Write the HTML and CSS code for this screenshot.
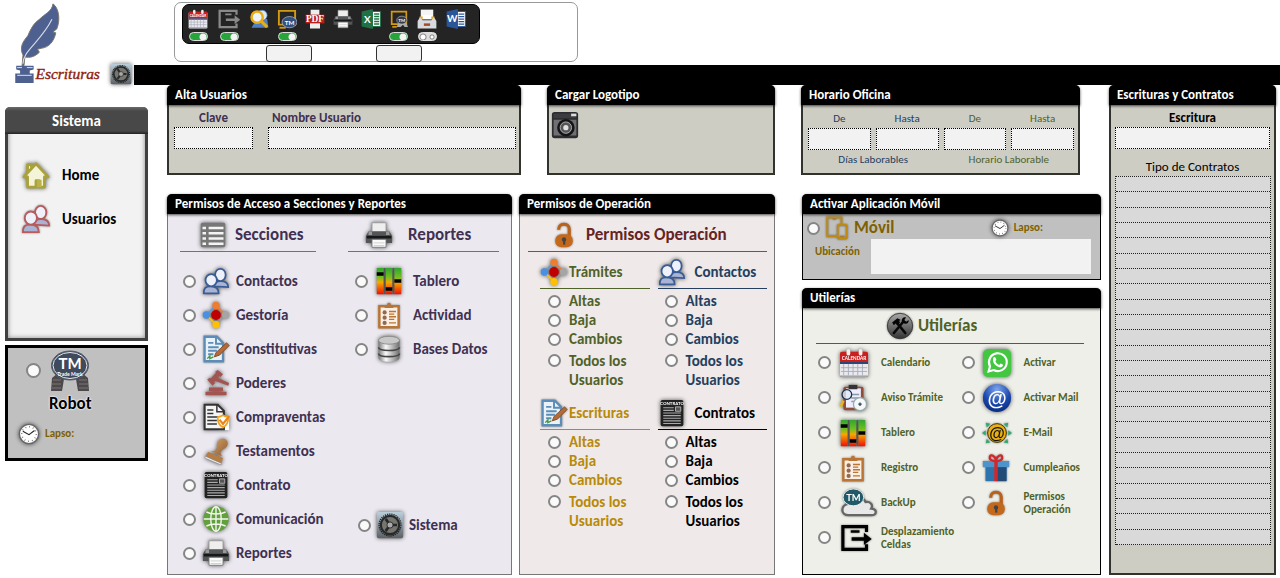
FILE: index.html
```html
<!DOCTYPE html>
<html lang="es">
<head>
<meta charset="utf-8">
<title>Escrituras</title>
<link rel="stylesheet" href="styles.css">
</head>
<body>
<svg class="defs" aria-hidden="true">
  <defs>
    <linearGradient id="heat" x1="0" y1="0" x2="0" y2="1"><stop offset="0" stop-color="#2fa52f"/><stop offset=".35" stop-color="#6fc01f"/><stop offset=".55" stop-color="#f5a800"/><stop offset="1" stop-color="#f01005"/></linearGradient>
    <linearGradient id="steel" x1="0" y1="0" x2="1" y2="0"><stop offset="0" stop-color="#777"/><stop offset=".35" stop-color="#fafafa"/><stop offset="1" stop-color="#6d6d6d"/></linearGradient>
    <linearGradient id="box" x1="0" y1="0" x2="0" y2="1"><stop offset="0" stop-color="#bcd0dc"/><stop offset="1" stop-color="#5b6065"/></linearGradient>
    <linearGradient id="ink" x1="0" y1="0" x2="0" y2="1"><stop offset="0" stop-color="#aaa"/><stop offset="1" stop-color="#333"/></linearGradient>
    <radialGradient id="mail" cx=".5" cy=".2" r=".8"><stop offset="0" stop-color="#7fa5ea"/><stop offset=".6" stop-color="#1b49b0"/><stop offset="1" stop-color="#0b2c80"/></radialGradient>
    <linearGradient id="wood" x1="0" y1="0" x2="1" y2="1"><stop offset="0" stop-color="#d9a268"/><stop offset="1" stop-color="#8c5a2c"/></linearGradient>
  </defs>
</svg>
<svg class="symbols" aria-hidden="true">
  <symbol id="people" viewBox="0 0 32 32"><g stroke-width="2" stroke="currentColor" fill="#eef1fa"><path d="M14 22c0-4 3-6 7-6s9 1 9 7z" fill="#a9b4d4" class="shirt"/><ellipse cx="21" cy="9" rx="6" ry="7"/><path d="M2 30c0-6 2-8 8-8s9 2 9 8z" fill="#a9b4d4" class="shirt"/><ellipse cx="10.500" cy="15" rx="6.500" ry="7"/></g></symbol>
  <symbol id="house" viewBox="0 0 32 32"><path d="M3 18 16 4l13 14h-4v11h-6v-7h-3v7H7V18zM7 12V5h4v3" fill="#f4f4d8" stroke="#a9a23a" stroke-width="3" stroke-linejoin="round"/><path d="M17 21h5v8h-5z" fill="#b9b24a"/></symbol>
  <symbol id="gear" viewBox="0 0 32 32"><rect x="1" y="1" width="30" height="30" rx="2" fill="url(#box)"/><circle cx="16" cy="16" r="12.500" fill="none" stroke="#222" stroke-width="1.500" stroke-dasharray="1.500 1"/><circle cx="16" cy="16" r="10.500" fill="#77756f" stroke="#26282a" stroke-width="2.500"/><path d="m16 16 8 0M16 16l-5-7M16 16l-5 7" stroke="#26282a" stroke-width="3"/><circle cx="16" cy="16" r="3.500" fill="#aaa" stroke="#26282a"/></symbol>
  <symbol id="list" viewBox="0 0 32 32"><rect x="2" y="2" width="28" height="28" rx="2" fill="#777"/><path d="M4 8h4M11 8h17M4 14h4M11 14h17M4 20h4M11 20h17M4 26h4M11 26h17" stroke="#f4f4f4" stroke-width="2.600"/></symbol>
  <symbol id="printer" viewBox="0 0 32 32"><path d="M8 2h16v10H8z" fill="#eee" stroke="#999"/><path d="M4 12h24l3 5v8H1v-8z" fill="#535557"/><path d="M2 17h28v3H2z" fill="#171819"/><path d="M4 12h4v4H4zM24 12h4v4h-4z" fill="#999"/><path d="M8 21h16v9H8z" fill="#fafafa" stroke="#777"/><path d="M10 25h12M10 28h12" stroke="#ccc"/></symbol>
  <symbol id="network" viewBox="0 0 32 32"><path d="M16 5 27 16" stroke="#ed7d31" stroke-width="2"/><path d="M27 16 16 27" stroke="#999" stroke-width="2"/><path d="M16 27 5 16" stroke="#ffc000" stroke-width="2"/><path d="M5 16 16 5" stroke="#5b9bd5" stroke-width="2"/><circle cx="16" cy="5" r="4.200" fill="#ed7d31"/><circle cx="27" cy="16" r="4.200" fill="#a5a5a5"/><circle cx="16" cy="27" r="4.200" fill="#ffc000"/><circle cx="5" cy="16" r="4.200" fill="#4a90e2"/><circle cx="16" cy="16" r="5.600" fill="#c00000"/></symbol>
  <symbol id="signdoc" viewBox="0 0 32 32"><path d="M3 2h14l7 7v21H3z" fill="#eaf2f8" stroke="#5b8db8" stroke-width="2.600"/><path d="M16 2v8h8M7 9h6M7 14h12M7 18h10M7 22h6" fill="none" stroke="#5b8db8" stroke-width="2.200"/><path d="m14 25 2-5L28 9l3 3-11 11z" fill="#b56a38" stroke="#7a4a2a"/><path d="m6 27 3-3v3l4-2" fill="none" stroke="#4a9a3a" stroke-width="1.600"/></symbol>
  <symbol id="gavel" viewBox="0 0 32 32"><g fill="#a25450"><path d="m8 13 9-10 4 3-9 11z"/><path d="m6 12 3-2 6 6-3 3zM15 3l3-2 6 5-3 3z"/><path d="m16 9 15 7-1 3-16-6z"/><path d="M8 21h16v4H8zM4 26h24v4H4z"/></g></symbol>
  <symbol id="shielddoc" viewBox="0 0 32 32"><path d="M18 16h13v15H18z" fill="#fff"/><path d="M3 2h15l7 7v21H3z" fill="#f4f4f4" stroke="#333" stroke-width="2.400"/><path d="M17 2v8h8M6 8h7M6 12h7M6 16h13M6 20h11M6 24h11" fill="none" stroke="#333" stroke-width="1.700"/><path d="M18 16c3 0 4-1 6-2 2 1 3 2 6 2 0 6-1 9-6 12-5-3-6-6-6-12z" fill="#fff" stroke="#f5a11a" stroke-width="2"/><path d="m20 19 4 5 7-9" fill="none" stroke="#e9861a" stroke-width="2.500"/></symbol>
  <symbol id="stamp" viewBox="0 0 32 32"><path d="M20 3c5-3 11 1 9 6-1 4-5 4-7 7-2 2 0 4 1 6l-13-6c5 0 7-1 7-5 0-3 0-6 3-8z" fill="url(#wood)"/><path d="m7 17 17 7-2 6L4 22z" fill="#b77c42"/><path d="m4 22 18 8v2L3 24z" fill="#eee" stroke="#777" stroke-width=".600"/></symbol>
  <symbol id="contract" viewBox="0 0 32 32"><rect x="3" y="1" width="26" height="30" rx="2" fill="#222"/><text x="16" y="7" class="t-contract" text-anchor="middle">CONTRATO</text><path d="M6 10h12M6 13h12M6 16h20M6 19h20M6 22h20M6 25h20M6 28h20" stroke="#aaa" stroke-width="1.400"/><path d="M20 9h6v5h-6z" fill="#555" stroke="#bbb"/></symbol>
  <symbol id="globe" viewBox="0 0 32 32"><circle cx="16" cy="16" r="14.500" fill="#62a03c"/><g fill="none" stroke="#f2f6ee" stroke-width="1.600"><ellipse cx="16" cy="16" rx="6" ry="14"/><path d="M16 2v28M2 16h28M5 8c6 3 16 3 22 0M5 24c6-3 16-3 22 0"/></g></symbol>
  <symbol id="bars" viewBox="0 0 32 32"><path d="M2 1h8v30H2zM12 1h8v30h-8zM22 1h8v30h-8z" fill="url(#heat)"/><path d="M2 6h8v4H2zM12 23h8v4h-8zM22 14h8v4h-8z" fill="#000"/><path d="M11 1v30M21 1v30" stroke="#555" stroke-width="2"/></symbol>
  <symbol id="clipboard" viewBox="0 0 32 32"><path d="M5 6h22v24H5z" fill="#fbeee2" stroke="#b97535" stroke-width="2.800"/><path d="M11 8V5h3a2.200 2.200 0 1 1 4 0h3v3z" fill="#b97535"/><g fill="#8e6a55"><circle cx="11" cy="13" r="2.400"/><circle cx="11" cy="19" r="2.400"/><circle cx="11" cy="25" r="2.400"/></g><path d="M16 12h8M16 15h6M16 18h8M16 21h6M16 25h8" stroke="#b97535" stroke-width="1.600"/></symbol>
  <symbol id="database" viewBox="0 0 32 32"><path d="M4 6v20c0 6 24 6 24 0V6z" fill="url(#steel)"/><ellipse cx="16" cy="6" rx="12" ry="4.500" fill="#c8c8c8" stroke="#888"/><path d="M4 14c0 5 24 5 24 0M4 21c0 5 24 5 24 0" fill="none" stroke="#444" stroke-width="1.800"/></symbol>
  <symbol id="lock" viewBox="0 0 32 32"><path d="M10 10V9c0-7 12-7 12 0v8" fill="none" stroke="#b9621b" stroke-width="3.600"/><rect x="6" y="15" width="20" height="15" rx="7" fill="#c4691c"/><circle cx="16" cy="21" r="2.500" fill="#444"/><path d="M15 22h2.500v5H15z" fill="#444"/></symbol>
  <symbol id="devices" viewBox="0 0 32 32"><g fill="none" stroke="#c08a10" stroke-width="2.600"><path d="M17 27H3V2h19v8"/><rect x="17" y="12" width="12" height="18" rx="1"/></g><path d="M10 4h5M20 27h6" stroke="#a87808" stroke-width="1.600"/></symbol>
  <symbol id="clock" viewBox="0 0 32 32"><circle cx="16" cy="16" r="14" fill="#fff" stroke="#666" stroke-width="2"/><circle cx="16" cy="16" r="10.500" fill="none" stroke="#444" stroke-width="2" stroke-dasharray="1 4.500"/><path d="m7 12 9 5 8-6" fill="none" stroke="#222" stroke-width="1.600"/></symbol>
  <symbol id="tools" viewBox="0 0 32 32"><circle cx="16" cy="16" r="14.500" fill="url(#ink)" stroke="#333"/><path d="m9 24 10-12M13 13l9 11" stroke="#080808" stroke-width="3" stroke-linecap="round"/><path d="m7 12 6-5 4 2-2 1 1 2-3 3-2-2-2 2zM18 9c1-3 3-3 5-3l-2 3 2 2 3-2c0 4-3 5-5 4l-3-1z" fill="#050505"/></symbol>
  <symbol id="calendar" viewBox="0 0 32 32"><rect x="1" y="5" width="30" height="26" rx="2" fill="#e9e9ee"/><path d="M1 15V6q0-2 2-2h26q2 0 2 2v9z" fill="#c8201f"/><path d="M1 15h30v2H1z" fill="#1e3b70"/><path d="M5 17v12M10 17v12M15 17v12M20 17v12M25 17v12M2 21h28M2 25h28" stroke="#a9adbc" stroke-width="1"/><path d="M1 30h30" stroke="#777"/><rect x="8" y="1" width="4" height="7" rx="2" fill="#eee"/><rect x="21" y="1" width="4" height="7" rx="2" fill="#eee"/><text x="16" y="13" class="t-cal" text-anchor="middle">CALENDAR</text></symbol>
  <symbol id="notice" viewBox="0 0 32 32"><rect x="5" y="3" width="23" height="27" rx="2" fill="#914d3a"/><path d="M8 5h17v22H8z" fill="#eef"/><path d="M11 1h10v5H11z" fill="#333"/><path d="M14 12h9M14 16h9M14 20h5" stroke="#89a" stroke-width="1.500"/><circle cx="9" cy="12" r="5.500" fill="#dfeaf4" fill-opacity=".8" stroke="#203050" stroke-width="1.500"/><path d="m5 19-3 7" stroke="#e3b71e" stroke-width="3"/><circle cx="24" cy="23" r="7.500" fill="#f4f8f8" stroke="#9aa" stroke-width="1.500"/><path d="M22 23h4M24 21v4" stroke="#345" stroke-width="1.500"/></symbol>
  <symbol id="cloud" viewBox="0 0 40 32"><path d="M9 29c-9 0-9-11 0-12 1-9 15-9 18-2 6-1 8 4 6 7 7 1 6 7 0 7z" fill="#e8e8e8" stroke="#666" stroke-width="2.500"/><ellipse cx="14" cy="10" rx="11" ry="9" fill="#215968" stroke="#e9eef0"/><text x="14" y="13.500" class="t-tm" text-anchor="middle">TM</text></symbol>
  <symbol id="exit" viewBox="0 0 36 32"><path d="M30 9V3H3v26h27v-6" fill="none" stroke="currentColor" stroke-width="3.600"/><path d="M13 15h14v-5l9 7-9 7v-5H13zM12 7h10v3H12z" fill="currentColor"/></symbol>
  <symbol id="phone" viewBox="0 0 32 32"><rect x="1" y="1" width="30" height="30" rx="6" fill="#43c640"/><path d="m7 25 1.500-5.500a9.500 9.500 0 1 1 4 4z" fill="none" stroke="#fff" stroke-width="2.300"/><path d="M12 10.500c1-1.500 2-1 2.500 0l.8 2-1 1.500c1 2 2 3 4 4l1.500-1.500 2.400 1.200c.8 1.400-1 3-2.800 3-4.500-.5-9-5-7.400-10.200z" fill="#fff"/></symbol>
  <symbol id="at" viewBox="0 0 32 32"><circle cx="16" cy="16" r="15" fill="url(#mail)"/><text x="16" y="23" class="t-at" text-anchor="middle">@</text></symbol>
  <symbol id="email" viewBox="0 0 32 32"><path d="m0 16 4-3v6zM32 16l-4-3v6zM4 5l5 1-4 4zM28 5l-5 1 4 4zM4 27l5-1-4-4zM28 27l-5-1 4-4z" fill="#31a872"/><circle cx="16" cy="16" r="10" fill="#eab010" stroke="#3a2c00"/><text x="16" y="22" class="t-email" text-anchor="middle">@</text></symbol>
  <symbol id="gift" viewBox="0 0 32 32"><path d="M4 13h24v18H4z" fill="#2f73ad"/><path d="M16 13h12v18H16z" fill="#234b78"/><path d="M1 8h30v7H1z" fill="#4d94cd"/><path d="M14 8h4v23h-4z" fill="#d2282b"/><path d="M15 8c-4 0-7-2-6-5s6-1 7 4c1-5 6-7 7-4s-2 5-6 5z" fill="none" stroke="#d2282b" stroke-width="2.600"/></symbol>
  <symbol id="camera" viewBox="0 0 32 32"><rect x="1" y="1" width="30" height="30" rx="3" fill="#2d2d2f"/><path d="M3 10h26v18H3z" fill="#707074"/><path d="M3 3h26v5H3z" fill="#3c3c40"/><path d="M23 3h6v3h-6z" fill="#ddd"/><circle cx="17" cy="19" r="10" fill="#141416"/><circle cx="17" cy="19" r="6.500" fill="#555" stroke="#bbb"/><circle cx="17" cy="19" r="3" fill="#e0e0e4"/></symbol>
  <symbol id="search" viewBox="0 0 32 32"><path d="M12 16h17l2 14H4z" fill="#4f80c4"/><circle cx="21" cy="10" r="8" fill="#dbe7f5" stroke="#4f80c4"/><circle cx="13" cy="13" r="9" fill="#eef3fa" stroke="#e8ac14" stroke-width="4"/><path d="m20 20 9 9" stroke="#e8ac14" stroke-width="5"/></symbol>
  <symbol id="monitor" viewBox="0 0 32 32"><path d="M3 3h26v22H3z" fill="#262626" stroke="#d69a12" stroke-width="3"/><path d="M4 30h10" stroke="#d69a12" stroke-width="3"/><ellipse cx="20" cy="21" rx="12" ry="9" fill="#34507c" stroke="#ccd"/><text x="20" y="25" class="t-tm" text-anchor="middle">TM</text></symbol>
  <symbol id="monitor2" viewBox="0 0 32 32"><path d="M3 3h26v22H3z" fill="#262626" stroke="#d69a12" stroke-width="3"/><path d="M4 30h8" stroke="#d69a12" stroke-width="3"/><path d="m12 30 3-9h13l4 9h-6l-3-4-4 4z" fill="#aaa"/><ellipse cx="21" cy="18" rx="9" ry="7" fill="#353c48" stroke="#ccc"/><text x="21" y="21" class="t-tms" text-anchor="middle">TM</text></symbol>
  <symbol id="pdf" viewBox="0 0 32 32"><path d="M9 1h14v9H9zM8 22h16v9H8z" fill="#eee"/><path d="M1 9h30v14H1z" fill="#b9201c"/><text x="16" y="21.500" class="t-pdf" text-anchor="middle">PDF</text></symbol>
  <symbol id="excel" viewBox="0 0 32 32"><path d="M18 4h13v24H18z" fill="#fff" stroke="#207245" stroke-width="1.500"/><path d="M21 8h8M21 12h8M21 16h8M21 20h8M21 24h8" stroke="#207245" stroke-width="2.500"/><path d="m1 4 18-4v32L1 28z" fill="#207245"/><text x="10" y="22" class="t-doc" text-anchor="middle">X</text></symbol>
  <symbol id="word" viewBox="0 0 32 32"><path d="M18 4h13v24H18z" fill="#fff" stroke="#2a5699" stroke-width="1.500"/><path d="M20 8h9M20 12h9M20 16h9M20 20h9M20 24h9" stroke="#2a5699" stroke-width="2"/><path d="m1 4 18-4v32L1 28z" fill="#2a5699"/><text x="10" y="21" class="t-doc" text-anchor="middle">W</text></symbol>
  <symbol id="drawer" viewBox="0 0 32 32"><path d="M6 1h20v14H6z" fill="#f5f5f5"/><path d="M4 12h24v5H4z" fill="#e9a520"/><path d="M9 10h14v6H9z" fill="#fff"/><path d="m1 19 4-6 4 5h14l4-5 4 6v12H1z" fill="#d9dadd"/><path d="M11 23h10v4H11z" fill="#a34b28"/></symbol>
  <symbol id="robot" viewBox="0 0 40 42"><path d="m1 41 1-13 6-5h7l-3 18zM39 41l-1-13-6-5h-7l3 18z" fill="#4d484a"/><path d="M3 30h8M2 34h9M2 38h9M29 30h8M29 34h9M29 38h9" stroke="#777"/><ellipse cx="20" cy="15.500" rx="18.500" ry="14.500" fill="#3f4a5c" stroke="#555e6c"/><ellipse cx="20" cy="15.500" rx="17" ry="13" fill="none" stroke="#e8e8e8"/><text x="20" y="19" class="t-robot" text-anchor="middle">TM</text><text x="20" y="26" class="t-mark" text-anchor="middle">Trade Mark</text></symbol>
</svg>

<header class="top">
  <div class="brand">
    <svg class="logo" viewBox="0 0 102 88" role="img" aria-label="Escrituras"><path d="M53 4c6 4 8 16 4 26l-4 3 3 1c-2 9-7 15-15 16l-4 1 2 3c-5 5-10 6-15 5l-1 9-2 1 1-12c-4-8 0-14 5-20 3-7 6-13 12-17C45 14 52 12 53 4z" fill="#4d6090" stroke="#7b776e"/><path d="M22 66c0-14 18-22 30-46" fill="none" stroke="#d7dbe6" stroke-width="1.200"/><path d="M15 68h18v4l-4 1v3h4v10H14V76h5v-3l-4-1z" fill="#4d6090"/><path d="M16 70h5M26 70h6M16 78h15" stroke="#dfe3ec"/><text x="35" y="82" class="t-logo">Escrituras</text></svg>
    <svg class="i22 glow"><use href="#gear"/></svg>
  </div>
  <div class="strip">
    <div class="toolbox">
      <div class="tools">
        <div class="tool"><svg class="w22"><use href="#calendar"/></svg><input type="checkbox" class="toggle" aria-label="Calendario" checked></div>
        <div class="tool exit"><svg class="w24"><use href="#exit"/></svg><input type="checkbox" class="toggle" aria-label="Desplazamiento" checked></div>
        <div class="tool"><svg class="w20"><use href="#search"/></svg></div>
        <div class="tool"><svg class="w20"><use href="#monitor"/></svg><input type="checkbox" class="toggle" aria-label="Monitor" checked></div>
        <div class="tool"><svg class="w20"><use href="#pdf"/></svg></div>
        <div class="tool"><svg class="w20"><use href="#printer"/></svg></div>
        <div class="tool"><svg class="w20"><use href="#excel"/></svg></div>
        <div class="tool"><svg class="w18"><use href="#monitor2"/></svg><input type="checkbox" class="toggle" aria-label="Robot" checked></div>
        <div class="tool"><svg class="w22"><use href="#drawer"/></svg><input type="checkbox" class="toggle" aria-label="Archivo"></div>
        <div class="tool"><svg class="w20"><use href="#word"/></svg></div>
      </div>
      <div class="slots"><button type="button" aria-label="Monitor"></button><button type="button" aria-label="Robot"></button></div>
    </div>
    <div class="bar"></div>
  </div>
</header>

<main class="page">
  <aside class="side">
    <nav class="menu">
      <h2>Sistema</h2>
      <a href="#home"><svg class="i30 glow"><use href="#house"/></svg>Home</a>
      <a href="#usuarios"><svg class="i30 soft rose"><use href="#people"/></svg><span>Usuarios</span></a>
    </nav>
    <section class="robot">
      <label class="robot-pick"><input type="radio" name="robot"><span><svg class="robot-pic"><use href="#robot"/></svg><b>Robot</b></span></label>
      <p class="lapse"><svg class="i22 glow"><use href="#clock"/></svg>Lapso:</p>
    </section>
  </aside>

  <div class="content">
    <div class="row-top">
      <section class="panel stone">
        <h2>Alta Usuarios</h2>
        <div class="fields">
          <label class="clave">Clave<input type="text"></label>
          <label class="nombre">Nombre Usuario<input type="text"></label>
        </div>
      </section>
      <section class="panel stone">
        <h2>Cargar Logotipo</h2>
        <button type="button" class="upload" aria-label="Cargar Logotipo"><svg class="i28"><use href="#camera"/></svg></button>
      </section>
      <section class="panel stone">
        <h2>Horario Oficina</h2>
        <div class="hours">
          <label class="navy">De<input type="text"></label>
          <label class="navy">Hasta<input type="text"></label>
          <label class="olive">De<input type="text"></label>
          <label class="olive">Hasta<input type="text"></label>
          <p class="navy">Días Laborables</p>
          <p class="olive">Horario Laborable</p>
        </div>
      </section>
    </div>

    <div class="row-main">
      <section class="panel lilac">
        <h2>Permisos de Acceso a Secciones y Reportes</h2>
        <div class="access">
          <div class="col">
            <h3><svg class="i28 glow"><use href="#list"/></svg>Secciones</h3>
            <label><input type="radio" name="s1"><svg class="i28 glow blue"><use href="#people"/></svg>Contactos</label>
            <label><input type="radio" name="s2"><svg class="i28 glow"><use href="#network"/></svg>Gestoría</label>
            <label><input type="radio" name="s3"><svg class="i28 soft"><use href="#signdoc"/></svg>Constitutivas</label>
            <label><input type="radio" name="s4"><svg class="i28 glow"><use href="#gavel"/></svg>Poderes</label>
            <label><input type="radio" name="s5"><svg class="i28 glow"><use href="#shielddoc"/></svg>Compraventas</label>
            <label><input type="radio" name="s6"><svg class="i28 glow"><use href="#stamp"/></svg>Testamentos</label>
            <label><input type="radio" name="s7"><svg class="i28 glow"><use href="#contract"/></svg>Contrato</label>
            <label><input type="radio" name="s8"><svg class="i28 glow"><use href="#globe"/></svg>Comunicación</label>
            <label><input type="radio" name="s9"><svg class="i28 glow"><use href="#printer"/></svg>Reportes</label>
          </div>
          <div class="col reports">
            <h3><svg class="i28 glow"><use href="#printer"/></svg>Reportes</h3>
            <label><input type="radio" name="r1"><svg class="i28 glow"><use href="#bars"/></svg>Tablero</label>
            <label><input type="radio" name="r2"><svg class="i28 soft"><use href="#clipboard"/></svg>Actividad</label>
            <label><input type="radio" name="r3"><svg class="i28 glow"><use href="#database"/></svg>Bases Datos</label>
            <label class="system"><input type="radio" name="r4"><svg class="i28 glow"><use href="#gear"/></svg>Sistema</label>
          </div>
        </div>
      </section>

      <section class="panel blush">
        <h2>Permisos de Operación</h2>
        <h3 class="op-title"><svg class="i28 soft"><use href="#lock"/></svg>Permisos Operación</h3>
        <div class="ops">
          <div class="op olive-d"><h4><svg class="i28 glow"><use href="#network"/></svg>Trámites</h4>
            <label><input type="radio" name="t1">Altas</label><label><input type="radio" name="t2">Baja</label><label><input type="radio" name="t3">Cambios</label><label class="two"><input type="radio" name="t4">Todos los<br>Usuarios</label></div>
          <div class="op navy-d wide"><h4><svg class="i28 glow blue"><use href="#people"/></svg><span>Contactos</span></h4>
            <label><input type="radio" name="c1">Altas</label><label><input type="radio" name="c2">Baja</label><label><input type="radio" name="c3">Cambios</label><label class="two"><input type="radio" name="c4">Todos los<br>Usuarios</label></div>
          <div class="op gold"><h4><svg class="i28 soft"><use href="#signdoc"/></svg><span>Escrituras</span></h4>
            <label><input type="radio" name="e1">Altas</label><label><input type="radio" name="e2">Baja</label><label><input type="radio" name="e3">Cambios</label><label class="two"><input type="radio" name="e4">Todos los<br>Usuarios</label></div>
          <div class="op black wide"><h4><svg class="i28 glow"><use href="#contract"/></svg><span>Contratos</span></h4>
            <label><input type="radio" name="k1">Altas</label><label><input type="radio" name="k2">Baja</label><label><input type="radio" name="k3">Cambios</label><label class="two"><input type="radio" name="k4">Todos los<br>Usuarios</label></div>
        </div>
      </section>

      <div class="stack">
        <section class="panel gray">
          <h2>Activar Aplicación Móvil</h2>
          <div class="mobile">
            <div class="mobile-head">
              <label><input type="radio" name="movil"><svg class="i24 soft"><use href="#devices"/></svg>Móvil</label>
              <p class="lapse"><svg class="i18 glow"><use href="#clock"/></svg>Lapso:</p>
            </div>
            <label class="place">Ubicación<textarea></textarea></label>
          </div>
        </section>
        <section class="panel mint">
          <h2>Utilerías</h2>
          <h3 class="ut-title"><svg class="i28 soft"><use href="#tools"/></svg>Utilerías</h3>
          <div class="utils">
            <label><input type="radio" name="u1"><svg class="i30 glow"><use href="#calendar"/></svg>Calendario</label>
            <label><input type="radio" name="u2"><svg class="i30 glow"><use href="#phone"/></svg>Activar</label>
            <label><input type="radio" name="u3"><svg class="i28 glow"><use href="#notice"/></svg>Aviso Trámite</label>
            <label><input type="radio" name="u4"><svg class="i30 glow"><use href="#at"/></svg>Activar Mail</label>
            <label><input type="radio" name="u5"><svg class="i28 glow"><use href="#bars"/></svg>Tablero</label>
            <label><input type="radio" name="u6"><svg class="i30 soft"><use href="#email"/></svg>E-Mail</label>
            <label><input type="radio" name="u7"><svg class="i28 soft"><use href="#clipboard"/></svg>Registro</label>
            <label><input type="radio" name="u8"><svg class="i28 soft"><use href="#gift"/></svg>Cumpleaños</label>
            <label><input type="radio" name="u9"><svg class="cloud soft"><use href="#cloud"/></svg>BackUp</label>
            <label><input type="radio" name="u10"><svg class="i28 soft"><use href="#lock"/></svg>Permisos<br>Operación</label>
            <label><input type="radio" name="u11"><svg class="exit-pic soft"><use href="#exit"/></svg>Desplazamiento<br>Celdas</label>
          </div>
        </section>
      </div>
    </div>
  </div>

  <section class="panel stone contracts">
    <h2>Escrituras y Contratos</h2>
    <label>Escritura<input type="text"></label>
    <h3>Tipo de Contratos</h3>
    <ul><li></li><li></li><li></li><li></li><li></li><li></li><li></li><li></li><li></li><li></li><li></li><li></li><li></li><li></li><li></li><li></li><li></li><li></li><li></li><li></li><li></li><li></li><li></li><li></li></ul>
  </section>
</main>
</body>
</html>
```
FILE: styles.css
```css
* { box-sizing: border-box; }
body { display: flex; flex-direction: column; min-height: 100vh; margin: 0; background: #fff; color: #000; font: bold 15px/18px Carlito, Lato, sans-serif; }
h2, h3, h4, p, ul { margin: 0; padding: 0; }
svg { display: block; flex: none; overflow: visible; }
.defs { position: absolute; width: 0; height: 0; }
.symbols { display: none; }
button { padding: 0; font: inherit; }
input, textarea { margin: 0; font: inherit; }

.t-cal { font: bold 5px Lato, sans-serif; fill: #fff; }
.t-contract { font: bold 5px Lato, sans-serif; fill: #fff; }
.t-tm { font: bold 10px Lato, sans-serif; fill: #fff; }
.t-tms { font: bold 8px Lato, sans-serif; fill: #fff; }
.t-at { font: bold 21px "Liberation Sans", sans-serif; fill: #fff; }
.t-email { font: bold 17px "Liberation Sans", sans-serif; fill: #111; }
.t-pdf { font: bold 15px "Liberation Serif", serif; fill: #fff; }
.t-doc { font: bold 16px Lato, sans-serif; fill: #fff; }
.t-robot { font: bold 15px Lato, sans-serif; fill: #fff; }
.t-mark { font: bold 5px Lato, sans-serif; fill: #fff; }
.t-logo { font: italic 16px "Liberation Serif", serif; fill: #8f1c10; stroke: #8f1c10; stroke-width: .4px; }

.i18 { width: 18px; height: 18px; }
.i22 { width: 22px; height: 22px; }
.i24 { width: 24px; height: 24px; }
.i28 { width: 28px; height: 28px; }
.i30 { width: 30px; height: 30px; }
.glow { filter: drop-shadow(0 0 2px rgba(0, 0, 0, .65)); }
.soft { filter: drop-shadow(0 0 1px rgba(0, 0, 0, .45)); }
.blue { color: #3a5c95; }
.rose { color: #b95a5c; }

input[type="radio"] { appearance: none; flex: none; width: 13px; height: 13px; border: 2px solid #858585; border-radius: 50%; background: #fafafa; }
input[type="text"] { display: block; width: 100%; height: 22px; padding: 0 4px; border: 1px dotted #000; border-radius: 0; background: #f2f2f2; }

.top { display: flex; }
.brand { display: flex; align-items: flex-end; gap: 8px; width: 134px; height: 85px; }
.logo { width: 102px; height: 85px; }
.strip { flex: 1; padding-top: 2px; }
.toolbox { width: 404px; height: 60px; margin-left: 40px; padding: 1px 7px 0; border: 1px solid #999; border-radius: 7px; }
.tools { display: flex; gap: 8px; width: 298px; height: 40px; padding: 4px 4px 0; border: 1px solid #000; border-radius: 7px; background: #242424; }
.tool { display: flex; flex-direction: column; align-items: center; gap: 3px; }
.tool svg { height: 20px; }
.exit { color: #8a8a8a; }
.w18 { width: 18px; }
.w20 { width: 20px; }
.w22 { width: 22px; }
.w24 { width: 24px; }
.toggle { appearance: none; width: 19px; height: 9px; border: 1px solid #ddd; border-radius: 5px; background: radial-gradient(circle at 4px 4px, #fff 2px, #888 3px, transparent 4px), radial-gradient(circle at 13px 4px, #fff 1px, #888 2px, transparent 3px), #ddd; }
.toggle:checked { background: radial-gradient(circle at 13px 4px, #f4f4f4 3px, transparent 4px), #27a53a; }
.slots { display: flex; gap: 64px; padding: 1px 0 0 84px; }
.slots button { width: 46px; height: 17px; border: 1px solid #333; border-radius: 3px; background: #f2f2f2; }
.bar { height: 20px; margin-top: 3px; background: #000; }

.page { display: flex; flex: 1; align-items: stretch; padding: 0 4px 3px 5px; }
.side { display: flex; flex-direction: column; gap: 4px; width: 143px; padding-top: 22px; }
.menu { height: 234px; border: 3px solid #404040; border-top: 0; border-radius: 5px 5px 0 0; background: #f2f2f2; box-shadow: inset 0 0 5px #888; }
.menu h2 { margin: 0 -3px 26px; padding: 5px 0 4px; border-radius: 5px 5px 0 0; background: linear-gradient(#6a6a6a, #484848 4px, #484848 24px, #222); color: #fff; font-size: 15px; text-align: center; }
.menu a { display: flex; align-items: center; gap: 11px; margin-bottom: 14px; padding-left: 13px; color: #000; text-decoration: none; }
.rose .shirt { fill: #dba9a8; }
.robot { height: 116px; padding: 2px 10px; border: 3px solid #000; background: #c0c0c0; }
.robot-pick { display: flex; align-items: flex-start; gap: 8px; height: 73px; }
.robot-pick input { width: 15px; height: 15px; margin: 13px 0 0 8px; }
.robot-pick span { display: flex; flex-direction: column; align-items: center; gap: 3px; }
.robot-pick b { font-size: 17px; text-shadow: 0 0 2px #fff, 0 0 2px #fff; }
.robot-pic { width: 40px; height: 42px; }
.lapse { display: flex; align-items: center; gap: 5px; color: #7f6000; font-size: 11px; }

.content { flex: 1; display: flex; flex-direction: column; gap: 19px; min-width: 0; padding-left: 19px; }
.panel { min-width: 0; border: 1px solid #777; border-top: 0; border-radius: 5px 5px 0 0; }
.panel > h2 { height: 20px; margin: 0 -1px; padding: 1px 8px; border-radius: 5px 5px 0 0; background: #000; box-shadow: 0 1px 3px rgba(0, 0, 0, .7); color: #fff; font-size: 13px; white-space: nowrap; }
.stone { border: 2px solid #33332e; border-top: 0; background: #cdcdc4; }
.panel.stone > h2 { margin: 0 -2px; }
.lilac { background: #ebe9ef; color: #403152; }
.blush { margin-left: 7px; background: #efe9e9; }
.gray { border-color: #000; background: #c0c0c0; color: #7f6000; }
.mint { flex: 1; border-color: #000; background: #eeefe9; color: #4f6228; }
.navy { color: #243f60; }
.olive { color: #4f6228; }

.row-top { display: grid; grid-template-columns: 354fr 228fr 279fr; gap: 26px; height: 90px; padding-right: 21px; }
.fields { display: flex; gap: 15px; padding: 4px 3px 0 5px; color: #403152; font-size: 13px; }
.clave { width: 79px; text-align: center; }
.nombre { flex: 1; text-indent: 4px; }
.upload { display: block; margin: 6px 2px; border: 0; background: none; }
.hours { display: grid; grid-template-columns: repeat(4, 1fr); gap: 1px 5px; padding: 5px 4px 0 5px; font-size: 11px; font-weight: normal; text-align: center; }
.hours p { grid-column: span 2; line-height: 18px; }

.row-main { display: grid; grid-template-columns: 345fr 263fr 326fr; flex: 1; }
.stack { display: flex; flex-direction: column; gap: 8px; padding-left: 27px; }

h3 { display: flex; align-items: center; font-size: 17px; }
.access { display: flex; justify-content: space-between; padding: 4px 12px 0; }
.col { width: 136px; }
.reports { width: 151px; }
.col h3 { gap: 8px; height: 34px; margin-bottom: 12px; padding-left: 19px; border-bottom: 1px solid #4f8090; }
.reports h3 { gap: 15px; padding-left: 17px; }
.col label { display: flex; align-items: center; gap: 6px; height: 34px; padding-left: 3px; white-space: nowrap; }
.reports label { gap: 7px; padding-left: 7px; }
.reports label svg { margin-right: 3px; }
.col .system { gap: 5px; margin-top: 142px; padding-left: 10px; }
.col .system svg { margin-right: 0; }

.op-title { gap: 8px; height: 34px; margin: 4px 7px 0 8px; padding-left: 22px; border-bottom: 1px solid #8c4a46; color: #632523; }
.ops { display: grid; grid-template-columns: 1fr 1fr; gap: 6px 8px; padding: 3px 7px 0 20px; }
.op h4 { display: flex; align-items: center; gap: 1px; height: 34px; margin-bottom: 3px; border-bottom: 1px solid currentColor; font-size: 15px; }
.op h4 span { flex: 1; }
.op label { display: flex; align-items: center; gap: 8px; padding-left: 8px; line-height: 19px; }
.op .two { align-items: flex-start; padding-top: 3px; }
.two input { margin-top: 2px; }
.op.wide h4 { gap: 9px; }
.op.wide label { padding-left: 7px; }
.olive-d { color: #4f6228; }
.navy-d { color: #243f60; }
.gold { color: #b88a08; }
.black { color: #000; }

.gray { height: 86px; }
.mobile { padding: 3px 9px 0 4px; }
.mobile-head { display: flex; align-items: center; height: 22px; }
.mobile-head label { display: flex; align-items: center; gap: 5px; font-size: 17px; }
.mobile-head .lapse { margin: 0 48px 0 auto; }
.place { display: flex; align-items: flex-start; justify-content: space-between; padding-left: 8px; font-size: 11px; line-height: 26px; }
.place textarea { width: 220px; height: 35px; border: 0; background: #f2f2f2; resize: none; }

.ut-title { gap: 4px; height: 36px; margin: 0 16px 0 13px; padding-left: 70px; border-bottom: 1px solid #4f6228; }
.utils { display: grid; grid-template-columns: 145fr 138fr; padding: 1px 0 11px 15px; font-size: 11px; line-height: 13px; }
.utils label { display: grid; grid-template-columns: 13px 34px 1fr; align-items: center; column-gap: 8px; height: 35px; white-space: nowrap; }
.utils label:nth-child(even) { column-gap: 7px; }
.cloud { width: 40px; height: 30px; }
.exit-pic { width: 34px; height: 28px; color: #000; }

.contracts { display: flex; flex-direction: column; width: 167px; margin-left: 8px; font-size: 13px; }
.contracts label { display: block; padding: 4px 4px 0; text-align: center; }
.contracts h3 { justify-content: center; padding: 9px 0 0; font-size: 13px; font-weight: normal; }
.contracts ul { display: flex; flex-direction: column; flex: 1; margin: 0 3px 28px 4px; border: 1px dotted #222; border-bottom: 0; list-style: none; background: #d9d9d9; }
.contracts li { flex: 1; border-bottom: 1px dotted #222; }
```
